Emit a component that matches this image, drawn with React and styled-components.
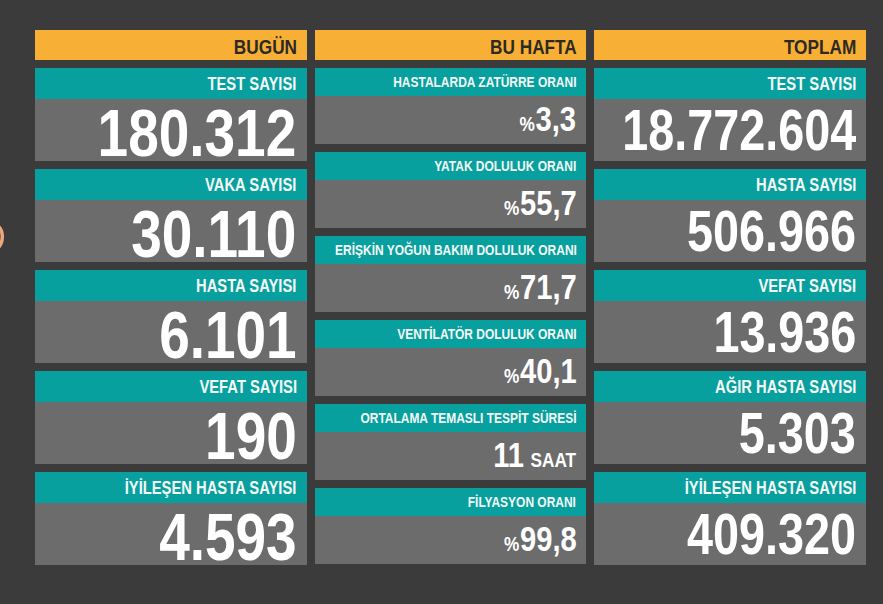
import styled, { createGlobalStyle } from 'styled-components';

const today = [
  { label: 'TEST SAYISI', value: '180.312' },
  { label: 'VAKA SAYISI', value: '30.110' },
  { label: 'HASTA SAYISI', value: '6.101' },
  { label: 'VEFAT SAYISI', value: '190' },
  { label: 'İYİLEŞEN HASTA SAYISI', value: '4.593' },
];

const week = [
  { label: 'HASTALARDA ZATÜRRE ORANI', value: '3,3', prefix: '%' },
  { label: 'YATAK DOLULUK ORANI', value: '55,7', prefix: '%' },
  { label: 'ERİŞKİN YOĞUN BAKIM DOLULUK ORANI', value: '71,7', prefix: '%' },
  { label: 'VENTİLATÖR DOLULUK ORANI', value: '40,1', prefix: '%' },
  { label: 'ORTALAMA TEMASLI TESPİT SÜRESİ', value: '11', suffix: 'SAAT' },
  { label: 'FİLYASYON ORANI', value: '99,8', prefix: '%' },
];

const total = [
  { label: 'TEST SAYISI', value: '18.772.604' },
  { label: 'HASTA SAYISI', value: '506.966' },
  { label: 'VEFAT SAYISI', value: '13.936' },
  { label: 'AĞIR HASTA SAYISI', value: '5.303' },
  { label: 'İYİLEŞEN HASTA SAYISI', value: '409.320' },
];

export default function App() {
  return (
    <>
      <GlobalStyle />
      <Page>
        <EdgeMark width="8" height="30" viewBox="0 0 8 30">
          <path d="M0 5 C5 9 6 19 1 26" fill="none" stroke="#eaa97c" strokeWidth="3.5" />
        </EdgeMark>
        <Board>
          <Column>
            <Heading><Narrow>BUGÜN</Narrow></Heading>
            {today.map(item => (
              <Card key={item.label} $wide>
                <Label><Narrow>{item.label}</Narrow></Label>
                <Body>
                  <BigValue $size={67}>{item.value}</BigValue>
                </Body>
              </Card>
            ))}
          </Column>
          <Column>
            <Heading><Narrow>BU HAFTA</Narrow></Heading>
            {week.map(item => (
              <Card key={item.label}>
                <Label $small><Narrow>{item.label}</Narrow></Label>
                <Body>
                  <RateValue>
                    {item.prefix && <Unit>{item.prefix}</Unit>}
                    {item.value}
                    {item.suffix && <Unit $spaced>{item.suffix}</Unit>}
                  </RateValue>
                </Body>
              </Card>
            ))}
          </Column>
          <Column>
            <Heading><Narrow>TOPLAM</Narrow></Heading>
            {total.map(item => (
              <Card key={item.label} $wide>
                <Label><Narrow>{item.label}</Narrow></Label>
                <Body>
                  <BigValue $size={57}>{item.value}</BigValue>
                </Body>
              </Card>
            ))}
          </Column>
        </Board>
      </Page>
    </>
  );
}

const GlobalStyle = createGlobalStyle`
  html, body {
    margin: 0;
    background: #3c3b3b;
  }
  body {
    font-family: "Liberation Sans", Arial, sans-serif;
    font-weight: bold;
  }
`;

const Page = styled.div`
  position: relative;
  width: 883px;
  height: 604px;
  padding: 30px 0 0 35px;
  box-sizing: border-box;
  overflow: hidden;
`;

const EdgeMark = styled.svg`
  position: absolute;
  left: -2px;
  top: 221px;
`;

const Board = styled.div`
  display: grid;
  grid-template-columns: repeat(3, 271.7px);
  column-gap: 8px;
`;

const Column = styled.div`
  display: flex;
  flex-direction: column;
  gap: 8px;
`;

// the source uses a condensed face; Liberation Sans squeezed to Narrow width
const Narrow = styled.span`
  display: inline-block;
  flex: none;
  white-space: nowrap;
  transform: scaleX(0.82);
  transform-origin: right center;
`;

const Heading = styled.div`
  height: 30px;
  display: flex;
  align-items: center;
  justify-content: flex-end;
  background: #f7b035;
  color: #2d2924;
  font-size: 21px;
  line-height: 1;
  padding: 2px 10px 0 0;
  box-sizing: border-box;
`;

const Card = styled.div`
  height: ${p => (p.$wide ? 93 : 76)}px;
  display: flex;
  flex-direction: column;
  background: #6d6c6c;
`;

const Label = styled.div`
  flex: none;
  height: ${p => (p.$small ? 28 : 31)}px;
  display: flex;
  align-items: center;
  justify-content: flex-end;
  background: #08a09e;
  color: #f3f8f6;
  font-size: ${p => (p.$small ? 14.6 : 18)}px;
  line-height: 1;
  padding: 1px 10px 0 0;
  box-sizing: border-box;
`;

const Body = styled.div`
  flex: 1;
  display: flex;
  align-items: center;
  justify-content: flex-end;
  padding-right: 10px;
  color: #ffffff;
`;

const BigValue = styled(Narrow)`
  font-size: ${p => p.$size}px;
  line-height: 1;
`;

const RateValue = styled(Narrow)`
  font-size: 35.5px;
  line-height: 1;
`;

const Unit = styled.span`
  font-size: 21px;
  margin-left: ${p => (p.$spaced ? 8 : 0)}px;
  margin-right: ${p => (p.$spaced ? 0 : 1)}px;
`;
